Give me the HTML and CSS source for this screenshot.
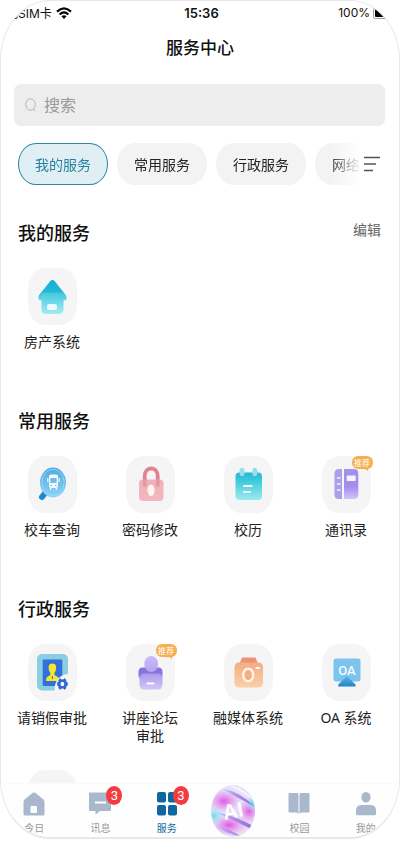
FILE: index.html
```html
<!DOCTYPE html>
<html lang="zh-CN">
<head>
  <meta charset="UTF-8">
  <meta name="viewport" content="width=device-width, initial-scale=1.0">
  <title>服务中心</title>
  <link rel="stylesheet" href="styles.css">
</head>
<body>
  <div class="phone">
    <div class="status-bar">
      <div class="status-left">
        <span>无SIM卡</span>
        <svg width="16" height="12" viewBox="0 0 16 12">
          <path d="M1 4.6 Q8 -2 15 4.6" fill="none" stroke="#000" stroke-width="2.2"/>
          <path d="M3.6 7.4 Q8 3.2 12.4 7.4" fill="none" stroke="#000" stroke-width="2.1"/>
          <path d="M5.5 9.3 Q8 7 10.5 9.3 L8 12Z"/>
        </svg>
      </div>
      <span class="time">15:36</span>
      <div class="status-right">
        <span>100%</span>
        <svg width="24" height="12" viewBox="0 0 24 12">
          <rect x=".5" y=".5" width="22" height="11" rx="2" fill="none" stroke="#999"/>
          <rect x="2" y="1" width="19" height="9" rx="1"/>
        </svg>
      </div>
    </div>

    <h1>服务中心</h1>

    <div class="search">
      <svg width="12" height="14" viewBox="0 0 12 14" fill="none" stroke="#b4b4b4">
        <ellipse cx="5.5" cy="6.5" rx="4.8" ry="5.7"/>
        <path d="M8.4 11 L10.3 13.2"/>
      </svg>
      <input type="text" placeholder="搜索" aria-label="搜索">
    </div>

    <div class="filter">
      <div class="chips">
        <button class="chip active">我的服务</button>
        <button class="chip">常用服务</button>
        <button class="chip">行政服务</button>
        <button class="chip">网络</button>
      </div>
      <button class="sort" aria-label="筛选">
        <svg width="17" height="16" viewBox="0 0 17 16" stroke="#555" stroke-width="1.4">
          <path d="M0 1.5H16M0 8H12M0 14.5H9"/>
        </svg>
      </button>
    </div>

    <main>
      <section>
        <div class="section-head">
          <h2>我的服务</h2>
          <button class="edit">编辑</button>
        </div>
        <div class="grid">
          <a class="item" href="#">
            <span class="tile">
              <svg viewBox="0 0 49 57">
                <defs>
                  <linearGradient id="roof" x2="0" y2="1"><stop stop-color="#16add0"/><stop offset="1" stop-color="#27c1da"/></linearGradient>
                  <linearGradient id="house" x2="0" y2="1"><stop stop-color="#45c6de"/><stop offset="1" stop-color="#a2eef0"/></linearGradient>
                </defs>
                <path d="M22.6 12.8 Q24.5 11 26.4 12.8 L37.6 27 Q40 32 36 32 H13 Q9 32 11.2 27Z" fill="url(#roof)"/>
                <path d="M15 24.5 H34 L38 28 Q39.5 32 35.5 32.5 V41 Q35.5 46 31 46 H18 Q13.5 46 13.5 41 V32.5 Q9.5 32 11.5 28Z" fill="url(#house)"/>
                <rect x="19" y="36" width="10" height="6" rx="2" fill="#fff" opacity=".85"/>
              </svg>
            </span>
            <span class="label">房产系统</span>
          </a>
        </div>
      </section>

      <section>
        <div class="section-head">
          <h2>常用服务</h2>
        </div>
        <div class="grid">
          <a class="item" href="#">
            <span class="tile">
              <svg viewBox="0 0 49 57">
                <defs>
                  <linearGradient id="lens" x2="0" y2="1"><stop stop-color="#4da9df"/><stop offset="1" stop-color="#8fd3f8"/></linearGradient>
                </defs>
                <path d="M18 36 L14 41" stroke="#2389cf" stroke-width="6" stroke-linecap="round"/>
                <ellipse cx="25" cy="26.5" rx="13" ry="15" fill="url(#lens)"/>
                <ellipse cx="25" cy="26.5" rx="11.2" ry="13.2" fill="none" stroke="#a3dafa" stroke-width=".8"/>
                <rect x="21" y="18.5" width="9" height="13.5" rx="2" fill="#f2faff"/>
                <rect x="22.3" y="22" width="6.4" height="5" rx=".6" fill="#6fbce9"/>
                <path d="M19.8 22V26M31.2 22V26M22.6 32V34M28.4 32V34" stroke="#f2faff" stroke-width="1.2"/>
                <path d="M22.5 29.5H24M27 29.5H28.5" stroke="#6fbce9"/>
              </svg>
            </span>
            <span class="label">校车查询</span>
          </a>
          <a class="item" href="#">
            <span class="tile">
              <svg viewBox="0 0 49 57">
                <defs>
                  <linearGradient id="lock" x2="0" y2="1"><stop stop-color="#efacb4"/><stop offset="1" stop-color="#f2b3b9"/></linearGradient>
                </defs>
                <path d="M18.7 29 V20 C18.7 10 31.7 10 31.7 20 V29" fill="none" stroke="#df8490" stroke-width="3.8" stroke-linecap="round"/>
                <rect x="13" y="23.5" width="24.5" height="21.5" rx="4" fill="url(#lock)" opacity=".93"/>
                <path d="M18.7 24V29M31.7 24V29" stroke="#e18e99" stroke-width="3.8" stroke-linecap="round" opacity=".6"/>
                <ellipse cx="25" cy="34.3" rx="3.6" ry="5.8" fill="#fff4f4"/>
              </svg>
            </span>
            <span class="label">密码修改</span>
          </a>
          <a class="item" href="#">
            <span class="tile">
              <svg viewBox="0 0 49 57">
                <defs>
                  <linearGradient id="cal" x2="0" y2="1"><stop stop-color="#21b8d0"/><stop offset=".25" stop-color="#38c7da"/><stop offset="1" stop-color="#9cebee"/></linearGradient>
                </defs>
                <rect x="11.5" y="16.5" width="26.5" height="27.5" rx="4" fill="url(#cal)"/>
                <ellipse cx="18" cy="16" rx="2.6" ry="4.2" fill="#94dfea"/>
                <ellipse cx="30.8" cy="16" rx="2.6" ry="4.2" fill="#94dfea"/>
                <path d="M20 30H27.5M20 36H26" stroke="#effdfd" stroke-width="2" stroke-linecap="round"/>
              </svg>
            </span>
            <span class="label">校历</span>
          </a>
          <a class="item" href="#">
            <span class="tile">
              <svg viewBox="0 0 49 57">
                <defs>
                  <linearGradient id="book" x2="0" y2="1"><stop stop-color="#a491e8"/><stop offset=".6" stop-color="#a38df0"/><stop offset="1" stop-color="#cfc6fa"/></linearGradient>
                </defs>
                <path d="M20 13 V43 H17 Q12.5 43 12.5 38.5 V17.5 Q12.5 13 17 13Z" fill="#ac9fe9"/>
                <path d="M22 13 H32 Q36.3 13 36.3 17.5 V38.5 Q36.3 43 32 43 H22Z" fill="url(#book)"/>
                <rect x="24.7" y="19.5" width="9" height="5.5" rx="1" fill="#f6f3ff"/>
                <path d="M15.5 22H18M15.5 28H18M15.5 34H18" stroke="#f3efff" stroke-width="1.5" stroke-linecap="round"/>
              </svg>
              <span class="tag">推荐</span>
            </span>
            <span class="label">通讯录</span>
          </a>
        </div>
      </section>

      <section>
        <div class="section-head">
          <h2>行政服务</h2>
        </div>
        <div class="grid">
          <a class="item" href="#">
            <span class="tile">
              <svg viewBox="0 0 49 57">
                <rect x="9" y="10" width="31" height="36.5" rx="5" fill="#8bcde2"/>
                <rect x="14.7" y="15.5" width="19.6" height="26.5" rx="1" fill="#3270dc"/>
                <path d="M24.4 19.5 C28.3 19.5 28.8 23 27.7 26.5 C27.2 28 26.4 28.8 26.4 29.8 V31 L30 33 Q31 34 31 37 H18 Q18 34 19 33 L22.4 31 V29.8 C22.4 28.8 21.6 28 21.1 26.5 C20 23 20.5 19.5 24.4 19.5Z" fill="#f5e72b"/>
                <path d="M24.4 32V35" stroke="#3270dc" stroke-width="1"/>
                <path d="M41 30 C32 30 26 37 26.5 47 H41Z" fill="#f5f5f5"/>
                <path d="M32.2 34.6 L33.5 35.7 H35.3 L36.6 34.6 L38 35.8 L37.9 37.6 L39.4 38.7 V41.3 L37.9 42.4 L38 44.2 L36.6 45.4 L35.3 44.3 H33.5 L32.2 45.4 L30.8 44.2 L30.9 42.4 L29.4 41.3 V38.7 L30.9 37.6 L30.8 35.8Z" fill="#3167d1" stroke="#3167d1" stroke-width=".6" stroke-linejoin="round"/>
                <ellipse cx="34.4" cy="40" rx="1.9" ry="2.3" fill="#f5f5f5"/>
              </svg>
            </span>
            <span class="label">请销假审批</span>
          </a>
          <a class="item" href="#">
            <span class="tile">
              <svg viewBox="0 0 49 57">
                <defs>
                  <linearGradient id="head" x2="0" y2="1"><stop stop-color="#cabcf9"/><stop offset="1" stop-color="#b5a4ee"/></linearGradient>
                  <linearGradient id="desk" x2="0" y2="1"><stop stop-color="#aa9aea"/><stop offset="1" stop-color="#d0c8fb"/></linearGradient>
                </defs>
                <path d="M16.5 23.5 H32.5 Q36.5 23.5 36.5 28 V31 Q36.5 35 32.5 35 H16.5 Q12.5 35 12.5 31 V28 Q12.5 23.5 16.5 23.5Z" fill="#8b70df"/>
                <ellipse cx="25.2" cy="20" rx="6.9" ry="8" fill="url(#head)"/>
                <rect x="13.5" y="29.5" width="23" height="16" rx="4.5" fill="url(#desk)"/>
                <path d="M21.5 39.5H27.5" stroke="#fff" stroke-width="2" stroke-linecap="round"/>
              </svg>
              <span class="tag">推荐</span>
            </span>
            <span class="label">讲座论坛<br>审批</span>
          </a>
          <a class="item" href="#">
            <span class="tile">
              <svg viewBox="0 0 49 57">
                <defs>
                  <linearGradient id="cam" x2="0" y2="1"><stop stop-color="#f1ad84"/><stop offset="1" stop-color="#fbd0a7"/></linearGradient>
                </defs>
                <path d="M18 13.5 H31.5 L34.5 21 H15Z" fill="#ed9374"/>
                <rect x="10.5" y="18.5" width="28.5" height="25" rx="4.5" fill="url(#cam)"/>
                <ellipse cx="24.2" cy="31" rx="5" ry="6.2" fill="#f1b084" stroke="#fff4e9" stroke-width="2.4"/>
                <path d="M32.5 24H35" stroke="#fff" stroke-width="1.8" stroke-linecap="round"/>
              </svg>
            </span>
            <span class="label">融媒体系统</span>
          </a>
          <a class="item" href="#">
            <span class="tile">
              <svg viewBox="0 0 49 57">
                <defs>
                  <linearGradient id="stand" x2="0" y2="1"><stop stop-color="#60b7e4"/><stop offset="1" stop-color="#2083c8"/></linearGradient>
                </defs>
                <rect x="11.5" y="14.5" width="27" height="23" rx="2.5" fill="#7cc4ed"/>
                <path d="M24.8 32 L33.5 40.5 V42.5 H16.3 V40.5Z" fill="url(#stand)"/>
                <text x="25" y="31" class="screen-text">OA</text>
              </svg>
            </span>
            <span class="label">OA 系统</span>
          </a>
          <a class="item" href="#" aria-label="更多服务">
            <span class="tile"></span>
          </a>
        </div>
      </section>
    </main>

    <nav>
      <a class="tab" href="#">
        <svg width="22" height="24" viewBox="0 0 22 24">
          <path fill-rule="evenodd" d="M9.8 .8 Q11 0 12.2 .8 L20.5 7.5 Q21.5 8.5 21.5 10 V22 Q21.5 23.5 20 23.5 H2 Q.5 23.5 .5 22 V10 Q.5 8.5 1.5 7.5Z M8.5 14 Q7.5 14 7.5 15 V20 Q7.5 21 8.5 21 H13 Q14 21 14 20 V15 Q14 14 13 14Z"/>
        </svg>
        <span>今日</span>
      </a>
      <a class="tab" href="#">
        <svg width="22" height="24" viewBox="0 0 22 24">
          <path d="M1 .5 H21 Q22 .5 22 1.5 V18 Q22 19 21 19 H11 L6.5 22.5 V19 H1 Q0 19 0 18 V1.5 Q0 .5 1 .5Z"/>
          <path d="M6 10.5H17" stroke="#fff" stroke-width="2"/>
        </svg>
        <span class="count">3</span>
        <span>讯息</span>
      </a>
      <a class="tab current" href="#">
        <svg width="22" height="24" viewBox="0 0 22 24">
          <rect x="1" y="0" width="9" height="10.5" rx="2"/>
          <rect x="12" y="0" width="9" height="10.5" rx="2"/>
          <rect x="1" y="13" width="9" height="10.5" rx="2"/>
          <rect x="12" y="13" width="9" height="10.5" rx="2"/>
        </svg>
        <span class="count">3</span>
        <span>服务</span>
      </a>
      <a class="tab orb" href="#">
        <svg width="46" height="54" viewBox="0 0 46 54">
          <defs>
            <radialGradient id="pink"><stop stop-color="#df58e3"/><stop offset="1" stop-color="#e58bea" stop-opacity="0"/></radialGradient>
            <radialGradient id="cyan"><stop stop-color="#68dbf0"/><stop offset="1" stop-color="#a7eef5" stop-opacity="0"/></radialGradient>
            <linearGradient id="streak"><stop stop-color="#7ceaf1"/><stop offset=".4" stop-color="#a783ed"/><stop offset="1" stop-color="#7450cf"/></linearGradient>
            <clipPath id="ball"><ellipse cx="23" cy="27" rx="22" ry="26"/></clipPath>
            <filter id="soft"><feGaussianBlur stdDeviation=".7"/></filter>
          </defs>
          <g clip-path="url(#ball)">
            <rect width="46" height="54" fill="#e9e1f8"/>
            <ellipse cx="14" cy="17" rx="17" ry="12" fill="url(#pink)"/>
            <ellipse cx="39" cy="27" rx="12" ry="13" fill="url(#pink)"/>
            <ellipse cx="19" cy="41" rx="19" ry="11" fill="url(#pink)"/>
            <ellipse cx="4" cy="32" rx="10" ry="10" fill="url(#cyan)"/>
            <ellipse cx="43" cy="19" rx="9" ry="9" fill="url(#cyan)"/>
            <g filter="url(#soft)">
              <path d="M13 5 Q29 7 44 22 Q27 14 13 5Z" fill="url(#streak)" opacity=".8"/>
              <path d="M5 28 Q24 31 45 43 L43 46 Q24 36 5 28Z" fill="url(#streak)" opacity=".8"/>
              <path d="M7 42 Q20 45 30 52 Q16 50 7 42Z" fill="url(#streak)" opacity=".6"/>
              <path d="M19 1 Q35 4 43 16 Q34 9 19 1Z" fill="#fff" opacity=".7"/>
            </g>
          </g>
          <text x="23" y="34" class="orb-text" transform="rotate(-10 23 27)">AI</text>
        </svg>
      </a>
      <a class="tab" href="#">
        <svg width="22" height="24" viewBox="0 0 22 24">
          <path d="M1.5 1 H9 Q10.5 1 10.5 2.5 V22 Q9.5 20.5 8 20.5 H1.5 Q.5 20.5 .5 19.5 V2 Q.5 1 1.5 1Z"/>
          <path d="M20.5 1 H13 Q11.5 1 11.5 2.5 V22 Q12.5 20.5 14 20.5 H20.5 Q21.5 20.5 21.5 19.5 V2 Q21.5 1 20.5 1Z"/>
        </svg>
        <span>校园</span>
      </a>
      <a class="tab" href="#">
        <svg width="22" height="24" viewBox="0 0 22 24">
          <ellipse cx="11" cy="5.3" rx="4.6" ry="5.3"/>
          <path d="M6 13 H16 Q21 13 21 19 V22 Q21 23.3 19.8 23.3 H2.2 Q1 23.3 1 22 V19 Q1 13 6 13Z"/>
        </svg>
        <span>我的</span>
      </a>
    </nav>
  </div>
</body>
</html>
```
FILE: styles.css
```css
* {
  margin: 0;
  padding: 0;
  box-sizing: border-box;
}

body {
  font-family: "Noto Sans", "Noto Sans CJK SC", sans-serif;
  font-size: 14px;
  color: #222;
  background: #fff;
}

a {
  color: inherit;
  text-decoration: none;
}

button {
  font-family: inherit;
  border: none;
  background: none;
  cursor: pointer;
}

.phone {
  display: flex;
  flex-direction: column;
  height: calc(100vh - 12px);
  border: 1px solid #e8e8e8;
  border-bottom: 2px solid #e8e8e8;
  border-radius: 50px / 60px;
  overflow: hidden;
}

/* status bar */
.status-bar {
  display: grid;
  grid-template-columns: 1fr auto 1fr;
  align-items: center;
  height: 23px;
  flex-shrink: 0;
  padding: 0 2px 0 5px;
  font-family: Inter, "Noto Sans CJK SC", sans-serif;
  font-size: 12px;
  color: #111;
}

.status-left,
.status-right {
  display: flex;
  align-items: center;
  gap: 4px;
}

.status-right {
  justify-content: flex-end;
  gap: 3px;
}

.time {
  font-size: 13px;
  font-weight: 600;
}

h1 {
  font-size: 17px;
  font-weight: 500;
  line-height: 48px;
  text-align: center;
  color: #111;
}

/* search */
.search {
  display: flex;
  align-items: center;
  gap: 7px;
  height: 42px;
  flex-shrink: 0;
  margin: 12px 14px 0 13px;
  padding: 0 11px;
  background: #ededed;
  border-radius: 7px;
}

.search input {
  flex: 1;
  min-width: 0;
  font-family: inherit;
  font-size: 16px;
  color: #333;
  border: none;
  outline: none;
  background: none;
}

.search input::placeholder {
  color: #999;
}

/* category chips */
.filter {
  display: flex;
  align-items: center;
  flex-shrink: 0;
  margin-top: 17px;
  padding: 0 18px 0 17px;
}

.chips {
  display: flex;
  gap: 9px;
  flex: 1;
  min-width: 0;
  overflow: hidden;
  -webkit-mask-image: linear-gradient(to left, transparent, #000 32px);
  mask-image: linear-gradient(to left, transparent, #000 32px);
}

.chip {
  flex-shrink: 0;
  height: 42px;
  padding: 0 17px;
  font-size: 14px;
  color: #222;
  background: #f3f3f3;
  border-radius: 18px / 21px;
}

.chip.active {
  padding: 0 16px;
  color: #27819f;
  background: #e0eff4;
  border: 1px solid #2c86a3;
}

.sort {
  display: flex;
  margin-left: 3px;
}

/* sections */
main {
  flex: 1;
  min-height: 0;
  overflow: hidden;
  padding-top: 34px;
}

section {
  margin-bottom: 56px;
}

.section-head {
  display: flex;
  justify-content: space-between;
  height: 28px;
  margin-bottom: 21px;
  padding: 0 18px 0 17px;
}

h2 {
  font-size: 18px;
  font-weight: 500;
  line-height: 28px;
  color: #111;
}

.edit {
  height: 22px;
  font-size: 14px;
  line-height: 22px;
  color: #666;
}

.grid {
  display: grid;
  grid-template-columns: repeat(4, 1fr);
  row-gap: 25px;
  padding: 0 4px 0 2px;
}

.item {
  display: flex;
  flex-direction: column;
  align-items: center;
  gap: 8px;
}

.tile {
  position: relative;
  width: 49px;
  height: 57px;
  background: #f5f5f5;
  border-radius: 17px / 20px;
}

.tile svg {
  display: block;
}

.label {
  line-height: 18px;
  text-align: center;
}

.screen-text {
  font-family: Roboto, sans-serif;
  font-size: 13px;
  font-weight: 500;
  text-anchor: middle;
  fill: #f3fbff;
}

.tag {
  position: absolute;
  top: 0;
  right: -2px;
  width: 21px;
  height: 13px;
  font-size: 8px;
  line-height: 13px;
  text-align: center;
  color: #fff;
  background: #f6b04f;
  border-radius: 6px;
}

.tag::after {
  content: "";
  position: absolute;
  right: 5px;
  bottom: -2px;
  border-top: 3px solid #f6b04f;
  border-left: 4px solid transparent;
}

/* bottom tabs */
nav {
  display: flex;
  flex-shrink: 0;
  height: 54px;
  background: #fefefe;
  border-top: 1px solid #fafafa;
}

.tab {
  position: relative;
  display: flex;
  flex: 1;
  flex-direction: column;
  align-items: center;
  gap: 5px;
  padding-top: 8px;
  font-size: 10px;
  line-height: 14px;
  color: #999;
}

.tab svg {
  flex-shrink: 0;
  fill: #a9b8cc;
}

.tab.current {
  color: #14699b;
}

.tab.current svg {
  fill: #0d689f;
}

.count {
  position: absolute;
  top: 2px;
  left: calc(50% + 6px);
  width: 16px;
  height: 19px;
  font-family: Roboto, sans-serif;
  font-size: 13px;
  line-height: 19px;
  text-align: center;
  color: #fff;
  background: #f43b40;
  border-radius: 50%;
}

.tab.orb {
  padding-top: 0;
}

.orb-text {
  font-family: Inter, sans-serif;
  font-size: 20px;
  font-weight: 600;
  text-anchor: middle;
  fill: #fff;
}
```
